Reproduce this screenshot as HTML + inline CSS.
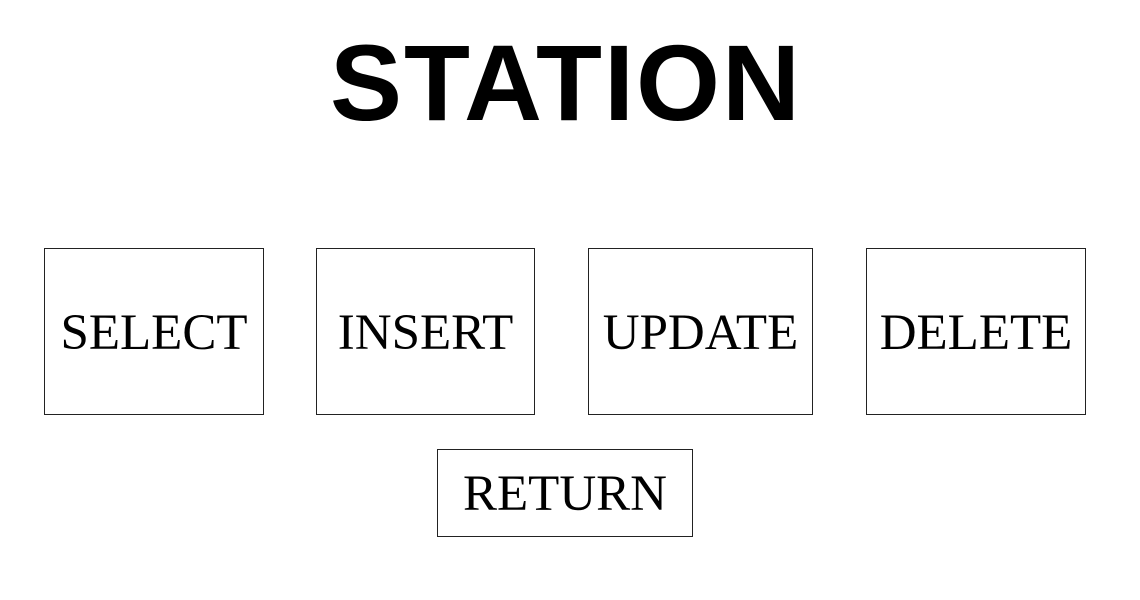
<!DOCTYPE html>
<html><head><style>
body{margin:0;width:1140px;height:600px;background:#fff;position:relative;overflow:hidden}
h1{position:absolute;left:0;width:1140px;margin:0;text-align:center;font:bold 108px/1 "Liberation Sans",sans-serif;letter-spacing:2px;top:29px;padding-right:8px;box-sizing:border-box}
.b{position:absolute;box-sizing:border-box;border:1.5px solid #222;display:flex;align-items:center;justify-content:center;font:51px "Liberation Serif",serif;color:#000;padding-top:2px}
</style></head><body>
<h1>STATION</h1>
<div class="b" style="left:44px;top:248px;width:220px;height:167px">SELECT</div>
<div class="b" style="left:316px;top:248px;width:219px;height:167px">INSERT</div>
<div class="b" style="left:588px;top:248px;width:225px;height:167px">UPDATE</div>
<div class="b" style="left:866px;top:248px;width:220px;height:167px">DELETE</div>
<div class="b" style="left:437px;top:449px;width:256px;height:88px">RETURN</div>
</body></html>
